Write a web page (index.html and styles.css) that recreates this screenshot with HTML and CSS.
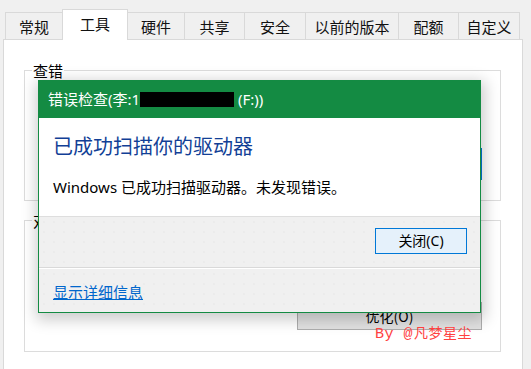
FILE: index.html
```html
<!DOCTYPE html>
<html lang="zh-CN">
<head>
<meta charset="utf-8">
<title>属性 - 工具</title>
<link rel="stylesheet" href="styles.css">
</head>
<body>
<div class="tabs">
  <div class="tab w57">常规</div>
  <div class="tab selected">工具</div>
  <div class="tab w58">硬件</div>
  <div class="tab w61">共享</div>
  <div class="tab w62">安全</div>
  <div class="tab w94">以前的版本</div>
  <div class="tab w61">配额</div>
  <div class="tab w62">自定义</div>
</div>
<div class="panel">
  <div class="group g1">
    <div class="legend">查错</div>
    <p class="desc">此选项将检查驱动器中的文件系统错误。</p>
    <div class="row"><button class="btn focus">检查(C)</button></div>
  </div>
  <div class="group g2">
    <div class="legend">对驱动器进行优化和碎片整理</div>
    <p class="desc">优化计算机的驱动器可以帮助其更高效运行。</p>
    <div class="row"><button class="btn">优化(O)</button></div>
  </div>
</div>

<div class="dialog">
  <div class="dlg-title">错误检查(李:1<span class="redact"></span> (F:))</div>
  <div class="dlg-body">
    <h1 class="instruction">已成功扫描你的驱动器</h1>
    <p class="msg">Windows 已成功扫描驱动器。未发现错误。</p>
  </div>
  <div class="dlg-actions">
    <button class="dlg-btn">关闭(C)</button>
  </div>
  <div class="dlg-footer">
    <a class="details" href="#">显示详细信息</a>
  </div>
</div>

<div class="watermark"><span class="wm-latin">By @</span>凡梦星尘</div>
</body>
</html>
```

FILE: styles.css
```css
* { box-sizing: border-box; }

html, body {
  margin: 0;
  padding: 0;
  width: 531px;
  height: 369px;
  overflow: hidden;
  background: #f0f0f0;
  font-family: "Noto Sans", "Noto Sans CJK SC", sans-serif;
  color: #000;
}

body { position: relative; }

/* ---------- tabs ---------- */
.tabs {
  display: flex;
  align-items: flex-end;
  height: 39px;
  padding-left: 5px;
  position: relative;
  z-index: 2;
}

.tab {
  height: 27px;
  border: 1px solid #d9d9d9;
  border-bottom: none;
  margin-left: -1px;
  background: #f0f0f0;
  text-align: center;
  font-family: "Noto Sans CJK SC", sans-serif;
  font-size: 15px;
  line-height: 20px;
  padding-top: 4px;
  color: #111;
}
.tab:first-child { margin-left: 0; }

.w57 { width: 58px; }
.w58 { width: 58px; }
.w61 { width: 61px; }
.w62 { width: 62px; }
.w94 { width: 94px; }

.tab.selected {
  width: 66px;
  height: 31px;
  margin-bottom: -1px;
  background: #fff;
  position: relative;
  z-index: 3;
}

/* ---------- panel ---------- */
.panel {
  margin-left: 3px;
  width: 520px;
  height: 340px;
  background: #fff;
  border: 1px solid #d9d9d9;
  padding: 30px 21px 0 20px;
}

.group {
  height: 131px;
  border: 1px solid #dcdcdc;
  padding: 0 18px 0 0;
}
.group.g2 {
  margin-top: 19px;
  height: 132px;
}

.legend {
  width: fit-content;
  margin: -9px 0 0 7px;
  padding: 0 1px;
  height: 18px;
  line-height: 18px;
  background: #fff;
  font-family: "Noto Sans CJK SC", sans-serif;
  font-size: 15px;
}

.desc {
  margin: 12px 0 0 23px;
  font-family: "Noto Sans CJK SC", sans-serif;
  font-size: 14px;
  line-height: 20px;
  height: 40px;
}

.row {
  display: flex;
  justify-content: flex-end;
  margin-top: 16px;
}
.g2 .row { margin-top: 20px; }

.btn {
  width: 185px;
  height: 28px;
  border: 1px solid #adadad;
  background: #e1e1e1;
  font-family: "Noto Sans CJK SC", sans-serif;
  font-size: 14px;
  line-height: 20px;
  color: #000;
  padding: 0;
}
.btn.focus {
  height: 32px;
  border: 1px solid #0078d7;
  background: #e5f1fb;
}

/* ---------- dialog ---------- */
.dialog {
  position: absolute;
  left: 38px;
  top: 80px;
  width: 443px;
  height: 233px;
  border: 1px solid #148b43;
  background: #f0f0f0;
  box-shadow: 1px 4px 14px 3px rgba(0, 0, 0, 0.2);
  z-index: 5;
  display: flex;
  flex-direction: column;
}

.dlg-title {
  height: 37px;
  background: #148b43;
  color: #fff;
  font-family: "Noto Sans", "Noto Sans CJK SC", sans-serif;
  font-size: 15px;
  line-height: 37px;
  padding-left: 9px;
  white-space: nowrap;
}

.redact {
  display: inline-block;
  width: 94px;
  height: 15px;
  background: #000;
  vertical-align: -2px;
}

.dlg-body {
  height: 98px;
  background: #fff;
  padding: 16px 0 0 14px;
}

.instruction {
  margin: 0;
  font-family: "Noto Sans CJK SC", sans-serif;
  font-weight: normal;
  font-size: 20px;
  line-height: 24px;
  color: #123f96;
}

.msg {
  margin: 19px 0 0;
  font-family: "Noto Sans", "Noto Sans CJK SC", sans-serif;
  font-size: 15px;
  line-height: 20px;
  color: #000;
}

.dlg-actions {
  height: 52px;
  border-top: 1px solid #dedede;
  border-bottom: 1px solid #d9d9d9;
  display: flex;
  justify-content: flex-end;
  align-items: flex-start;
  padding: 11px 13px 0 0;
  background-color: #f0f0f0;
  background-image: radial-gradient(circle, #e7e7e7 0.5px, transparent 1px);
  background-size: 10px 10px;
}

.dlg-btn {
  width: 92px;
  height: 26px;
  border: 1px solid #0078d7;
  background: #e5f1fb;
  font-family: "Noto Sans", "Noto Sans CJK SC", sans-serif;
  font-size: 14px;
  line-height: 20px;
  padding: 0;
  color: #000;
}

.dlg-footer {
  flex: 1;
  border-top: 1px solid #fff;
  padding: 12px 0 0 14px;
  background-color: #f0f0f0;
  background-image: radial-gradient(circle, #e7e7e7 0.5px, transparent 1px);
  background-size: 10px 10px;
}

.details {
  font-family: "Noto Sans CJK SC", sans-serif;
  font-size: 15px;
  line-height: 20px;
  color: #0066cc;
  text-decoration: underline;
}

/* ---------- watermark ---------- */
.watermark {
  position: absolute;
  left: 375px;
  top: 324px;
  z-index: 6;
  color: #ff4040;
  font-family: "Noto Sans CJK SC", sans-serif;
  font-size: 14px;
  line-height: 17px;
  letter-spacing: 0.5px;
  white-space: nowrap;
}
.wm-latin {
  font-family: "Liberation Mono", monospace;
  font-size: 15px;
  margin-right: 1px;
}
```
